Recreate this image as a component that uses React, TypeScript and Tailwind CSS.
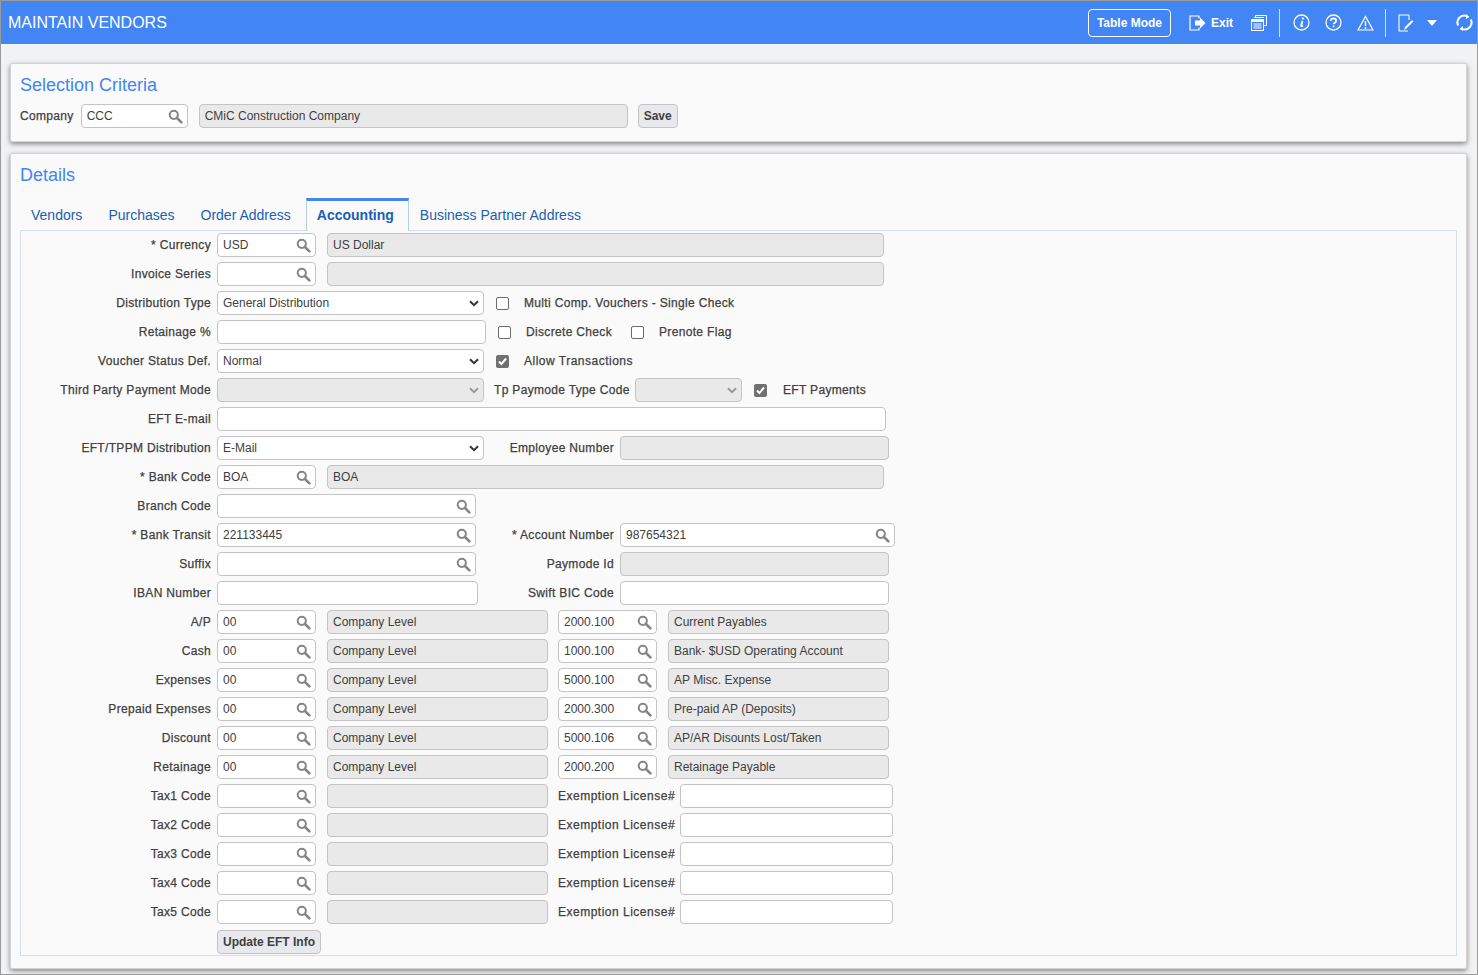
import { type ReactNode } from 'react';

function SearchIcon() {
  return (
    <svg width="15" height="15" viewBox="0 0 15 15" className="shrink-0" fill="none" stroke="#858585">
      <circle cx="5.8" cy="5.8" r="4.1" strokeWidth="2" />
      <path d="M9 9l4.4 4.4" strokeWidth="2.6" strokeLinecap="round" />
    </svg>
  );
}

function Chevron({ muted }: { muted?: boolean }) {
  return (
    <svg width="10" height="7" viewBox="0 0 10 7" fill="none" stroke={muted ? '#9a9a9a' : '#333'} strokeWidth="2">
      <path d="M1 1.2l4 4 4-4" />
    </svg>
  );
}

const boxBase = 'flex h-6 shrink-0 items-center rounded-[4px] border border-[#c4c4c4] text-xs text-[#404040]';

function Lookup({ w, value }: { w: string; value?: string }) {
  return (
    <div className={`${boxBase} ${w} justify-between bg-white pl-[5px] pr-[4px]`}>
      <span className="-mt-px">{value}</span>
      <SearchIcon />
    </div>
  );
}

function Text({ w, value }: { w: string; value?: string }) {
  return <div className={`${boxBase} ${w} bg-white pl-[5px]`}>{value}</div>;
}

function Off({ w, value }: { w: string; value?: string }) {
  return (
    <div className={`${boxBase} ${w} bg-[#e9e9e9] pl-[5px]`}>
      <span className="-mt-px">{value}</span>
    </div>
  );
}

function Select({ w, value, off }: { w: string; value?: string; off?: boolean }) {
  return (
    <div className={`${boxBase} ${w} justify-between pl-[5px] pr-[4px] ${off ? 'bg-[#e9e9e9]' : 'bg-white'}`}>
      <span className="-mt-px">{value}</span>
      <Chevron muted={off} />
    </div>
  );
}

function Check({ on, ml }: { on?: boolean; ml: string }) {
  return (
    <div className={`flex h-[13px] w-[13px] shrink-0 items-center justify-center rounded-[2px] ${ml} ${on ? 'bg-[#707070]' : 'border border-[#6b6b6b] bg-white'}`}>
      {on && (
        <svg width="11" height="11" viewBox="0 0 11 11" fill="none" stroke="#fff" strokeWidth="2">
          <path d="M2 5.5l2.4 2.6L9 2.5" />
        </svg>
      )}
    </div>
  );
}

function Lbl({ children, w, ml, wide }: { children: ReactNode; w?: string; ml?: string; wide?: boolean }) {
  return <span className={`shrink-0 whitespace-nowrap text-right text-xs text-[#404040] [-webkit-text-stroke:0.25px_#404040] ${wide ? 'tracking-[0.5px]' : 'tracking-[0.33px]'} ${w ?? ''} ${ml ?? ''}`}>{children}</span>;
}

function Row({ label, children }: { label: string; children?: ReactNode }) {
  return (
    <div className="mb-[5px] flex h-6 items-center">
      <Lbl w="w-[190px]" ml="mr-[6px]">{label}</Lbl>
      {children}
    </div>
  );
}

function Section({ title, children, className }: { title: string; children: ReactNode; className: string }) {
  return (
    <section className={`rounded-[2px] border border-[#d4d4d4] bg-[#fafafa] px-[9px] pt-[10px] shadow-[0_2px_5px_rgba(0,0,0,0.45)] ${className}`}>
      <h2 className="text-lg leading-[22px] text-[#4285f4]">{title}</h2>
      {children}
    </section>
  );
}

function AccountRow({ label, acct, desc }: { label: string; acct: string; desc: string }) {
  return (
    <Row label={label}>
      <Lookup w="w-[99px]" value="00" />
      <div className="w-[11px] shrink-0" />
      <Off w="w-[221px]" value="Company Level" />
      <div className="w-[10px] shrink-0" />
      <Lookup w="w-[99px]" value={acct} />
      <div className="w-[11px] shrink-0" />
      <Off w="w-[221px]" value={desc} />
    </Row>
  );
}

function TaxRow({ label }: { label: string }) {
  return (
    <Row label={label}>
      <Lookup w="w-[99px]" />
      <div className="w-[11px] shrink-0" />
      <Off w="w-[221px]" />
      <Lbl wide ml="ml-[10px]" w="w-[116px]">Exemption License#</Lbl>
      <div className="w-[6px] shrink-0" />
      <Text w="w-[213px]" />
    </Row>
  );
}

const tabs = ['Vendors', 'Purchases', 'Order Address'];

export default function App() {
  return (
    <div className="h-[975px] w-[1478px] overflow-hidden border border-[#9a9a9a] bg-[#f1f2f4] font-['Liberation_Sans',Arial,sans-serif]">
      <header className="flex h-[43px] items-center justify-between bg-[#4285f4] pl-[7px] pr-[4px] text-white">
        <h1 className="text-base">MAINTAIN VENDORS</h1>
        <div className="flex items-center">
          <button className="mr-[18px] flex h-7 w-[83px] items-center justify-center rounded-[4px] border border-white text-xs font-bold">Table Mode</button>
          <svg width="17" height="16" viewBox="0 0 17 16" fill="none" stroke="#fff" strokeWidth="1.2">
            <path d="M10 3.5V1H1v14h9v-2.5" />
            <path d="M6 5.5h5V2.5L16.5 8 11 13.5v-3H6z" fill="#fff" stroke="none" />
          </svg>
          <span className="ml-[5px] mr-[18px] text-xs font-bold">Exit</span>
          <svg width="16" height="16" viewBox="0 0 16 16" fill="none" stroke="#fff">
            <path d="M4.5 3V.5h11v10H13" />
            <path d="M3 2.5h10" />
            <rect x="0.5" y="4.5" width="12" height="11" />
            <path d="M1 6h11" strokeWidth="2" />
            <path d="M2.5 9h8M2.5 11h8M2.5 13h8" />
          </svg>
          <div className="ml-3 mr-[13px] h-7 w-px bg-[#cfe0fc]" />
          <svg width="17" height="17" viewBox="0 0 17 17" fill="none" stroke="#fff">
            <circle cx="8.5" cy="8.5" r="7.5" strokeWidth="1.3" />
            <path d="M9.8 3.6v1.8M9.4 7L8.2 11.5c-.2 1 .6 1 1.8.2" strokeWidth="1.9" />
          </svg>
          <svg width="17" height="17" viewBox="0 0 17 17" fill="none" stroke="#fff" className="ml-[15px]">
            <circle cx="8.5" cy="8.5" r="7.5" strokeWidth="1.3" />
            <path d="M5.9 6.7c0-3.2 5.3-3.2 5.3 0 0 2-2.6 2-2.6 3.6M8.6 11.5v1.8" strokeWidth="1.7" />
          </svg>
          <svg width="17" height="16" viewBox="0 0 17 16" fill="none" stroke="#fff" className="ml-[15px]">
            <path d="M8.5 1.5L16 15H1z" strokeWidth="1.2" />
            <path d="M8.5 6v5M8.5 12v2" strokeWidth="1.4" />
          </svg>
          <div className="ml-[11px] mr-3 h-7 w-px bg-[#cfe0fc]" />
          <svg width="16" height="18" viewBox="0 0 16 18" fill="none" stroke="#fff" strokeWidth="1.1">
            <path d="M11 1H1v16h9" />
            <path d="M11 1v5" />
            <path d="M6 16l1-3 7-7 1.4 1.4-7 7z" fill="#fff" stroke="none" />
          </svg>
          <svg width="10" height="6" viewBox="0 0 10 6" className="ml-[13px]"><path d="M0 0h10L5 6z" fill="#fff" /></svg>
          <svg width="17" height="17" viewBox="0 0 17 17" fill="none" stroke="#fff" strokeWidth="2" className="ml-[19px]">
            <path d="M2.2 11.5A6.8 6.8 0 0 1 11 2.2" />
            <path d="M14.8 5.5A6.8 6.8 0 0 1 6 14.8" />
            <path d="M10 0l3.5 3L10 5z" fill="#fff" stroke="none" />
            <path d="M7 12l-3.5 3L7 17z" fill="#fff" stroke="none" />
          </svg>
        </div>
      </header>

      <div className="pl-[9px] pr-[10px] pt-[19px]">
        <Section title="Selection Criteria" className="h-[79px]">
          <div className="mt-2 flex h-6 items-center">
            <Lbl ml="mr-[7px]">Company</Lbl>
            <Lookup w="w-[107px]" value="CCC" />
            <div className="w-[11px] shrink-0" />
            <Off w="w-[429px]" value="CMiC Construction Company" />
            <button className="ml-[10px] h-6 w-10 rounded-[4px] border border-[#c4c4c4] bg-[#e7e9ec] text-xs font-bold text-[#404040]">Save</button>
          </div>
        </Section>

        <Section title="Details" className="mt-[11px] h-[816px]">
          <div className="mt-[11px] flex h-[33px] items-end pl-px">
            {tabs.map((t) => (
              <span key={t} className="mb-[5px] mr-[6px] px-[10px] text-sm text-[#1a5fb4]">{t}</span>
            ))}
            <span className="z-10 -mb-px -ml-[1px] flex h-[33px] w-[103px] items-center border-l border-r border-t-[3px] border-[#b8cce4] border-t-[#4285f4] bg-[#fafafa] pb-[3px] pl-[10px] text-sm font-bold text-[#1a5fb4]">Accounting</span>
            <span className="mb-[5px] ml-px px-[10px] text-sm text-[#1a5fb4]">Business Partner Address</span>
          </div>
          <div className="h-[726px] border border-[#d3e0ef] pt-[2px]">
            <Row label="* Currency"><Lookup w="w-[99px]" value="USD" /><div className="w-[11px] shrink-0" /><Off w="w-[557px]" value="US Dollar" /></Row>
            <Row label="Invoice Series"><Lookup w="w-[99px]" /><div className="w-[11px] shrink-0" /><Off w="w-[557px]" /></Row>
            <Row label="Distribution Type">
              <Select w="w-[267px]" value="General Distribution" />
              <Check ml="ml-[12px]" />
              <Lbl ml="ml-[15px]">Multi Comp. Vouchers - Single Check</Lbl>
            </Row>
            <Row label="Retainage %">
              <Text w="w-[269px]" />
              <Check ml="ml-[12px]" />
              <Lbl ml="ml-[15px]">Discrete Check</Lbl>
              <Check ml="ml-[19px]" />
              <Lbl ml="ml-[15px]">Prenote Flag</Lbl>
            </Row>
            <Row label="Voucher Status Def.">
              <Select w="w-[267px]" value="Normal" />
              <Check on ml="ml-[12px]" />
              <Lbl wide ml="ml-[15px]">Allow Transactions</Lbl>
            </Row>
            <Row label="Third Party Payment Mode">
              <Select w="w-[267px]" off />
              <Lbl ml="ml-[10px]" w="w-[135px]">Tp Paymode Type Code</Lbl>
              <div className="w-[6px] shrink-0" />
              <Select w="w-[107px]" off />
              <Check on ml="ml-[12px]" />
              <Lbl ml="ml-[16px]">EFT Payments</Lbl>
            </Row>
            <Row label="EFT E-mail"><Text w="w-[669px]" /></Row>
            <Row label="EFT/TPPM Distribution">
              <Select w="w-[267px]" value="E-Mail" />
              <Lbl w="w-[130px]">Employee Number</Lbl>
              <div className="w-[6px] shrink-0" />
              <Off w="w-[269px]" />
            </Row>
            <Row label="* Bank Code"><Lookup w="w-[99px]" value="BOA" /><div className="w-[11px] shrink-0" /><Off w="w-[557px]" value="BOA" /></Row>
            <Row label="Branch Code"><Lookup w="w-[259px]" /></Row>
            <Row label="* Bank Transit">
              <Lookup w="w-[259px]" value="221133445" />
              <Lbl w="w-[138px]">* Account Number</Lbl>
              <div className="w-[6px] shrink-0" />
              <Lookup w="w-[275px]" value="987654321" />
            </Row>
            <Row label="Suffix">
              <Lookup w="w-[259px]" />
              <Lbl w="w-[138px]">Paymode Id</Lbl>
              <div className="w-[6px] shrink-0" />
              <Off w="w-[269px]" />
            </Row>
            <Row label="IBAN Number">
              <Text w="w-[261px]" />
              <Lbl w="w-[136px]">Swift BIC Code</Lbl>
              <div className="w-[6px] shrink-0" />
              <Text w="w-[269px]" />
            </Row>
            <AccountRow label="A/P" acct="2000.100" desc="Current Payables" />
            <AccountRow label="Cash" acct="1000.100" desc="Bank- $USD Operating Account" />
            <AccountRow label="Expenses" acct="5000.100" desc="AP Misc. Expense" />
            <AccountRow label="Prepaid Expenses" acct="2000.300" desc="Pre-paid AP (Deposits)" />
            <AccountRow label="Discount" acct="5000.106" desc="AP/AR Disounts Lost/Taken" />
            <AccountRow label="Retainage" acct="2000.200" desc="Retainage Payable" />
            <TaxRow label="Tax1 Code" />
            <TaxRow label="Tax2 Code" />
            <TaxRow label="Tax3 Code" />
            <TaxRow label="Tax4 Code" />
            <TaxRow label="Tax5 Code" />
            <div className="ml-[196px]">
              <button className="h-6 w-[104px] rounded-[4px] border border-[#c4c4c4] bg-[#e7e9ec] text-xs font-bold text-[#404040]">Update EFT Info</button>
            </div>
          </div>
        </Section>
      </div>
    </div>
  );
}
